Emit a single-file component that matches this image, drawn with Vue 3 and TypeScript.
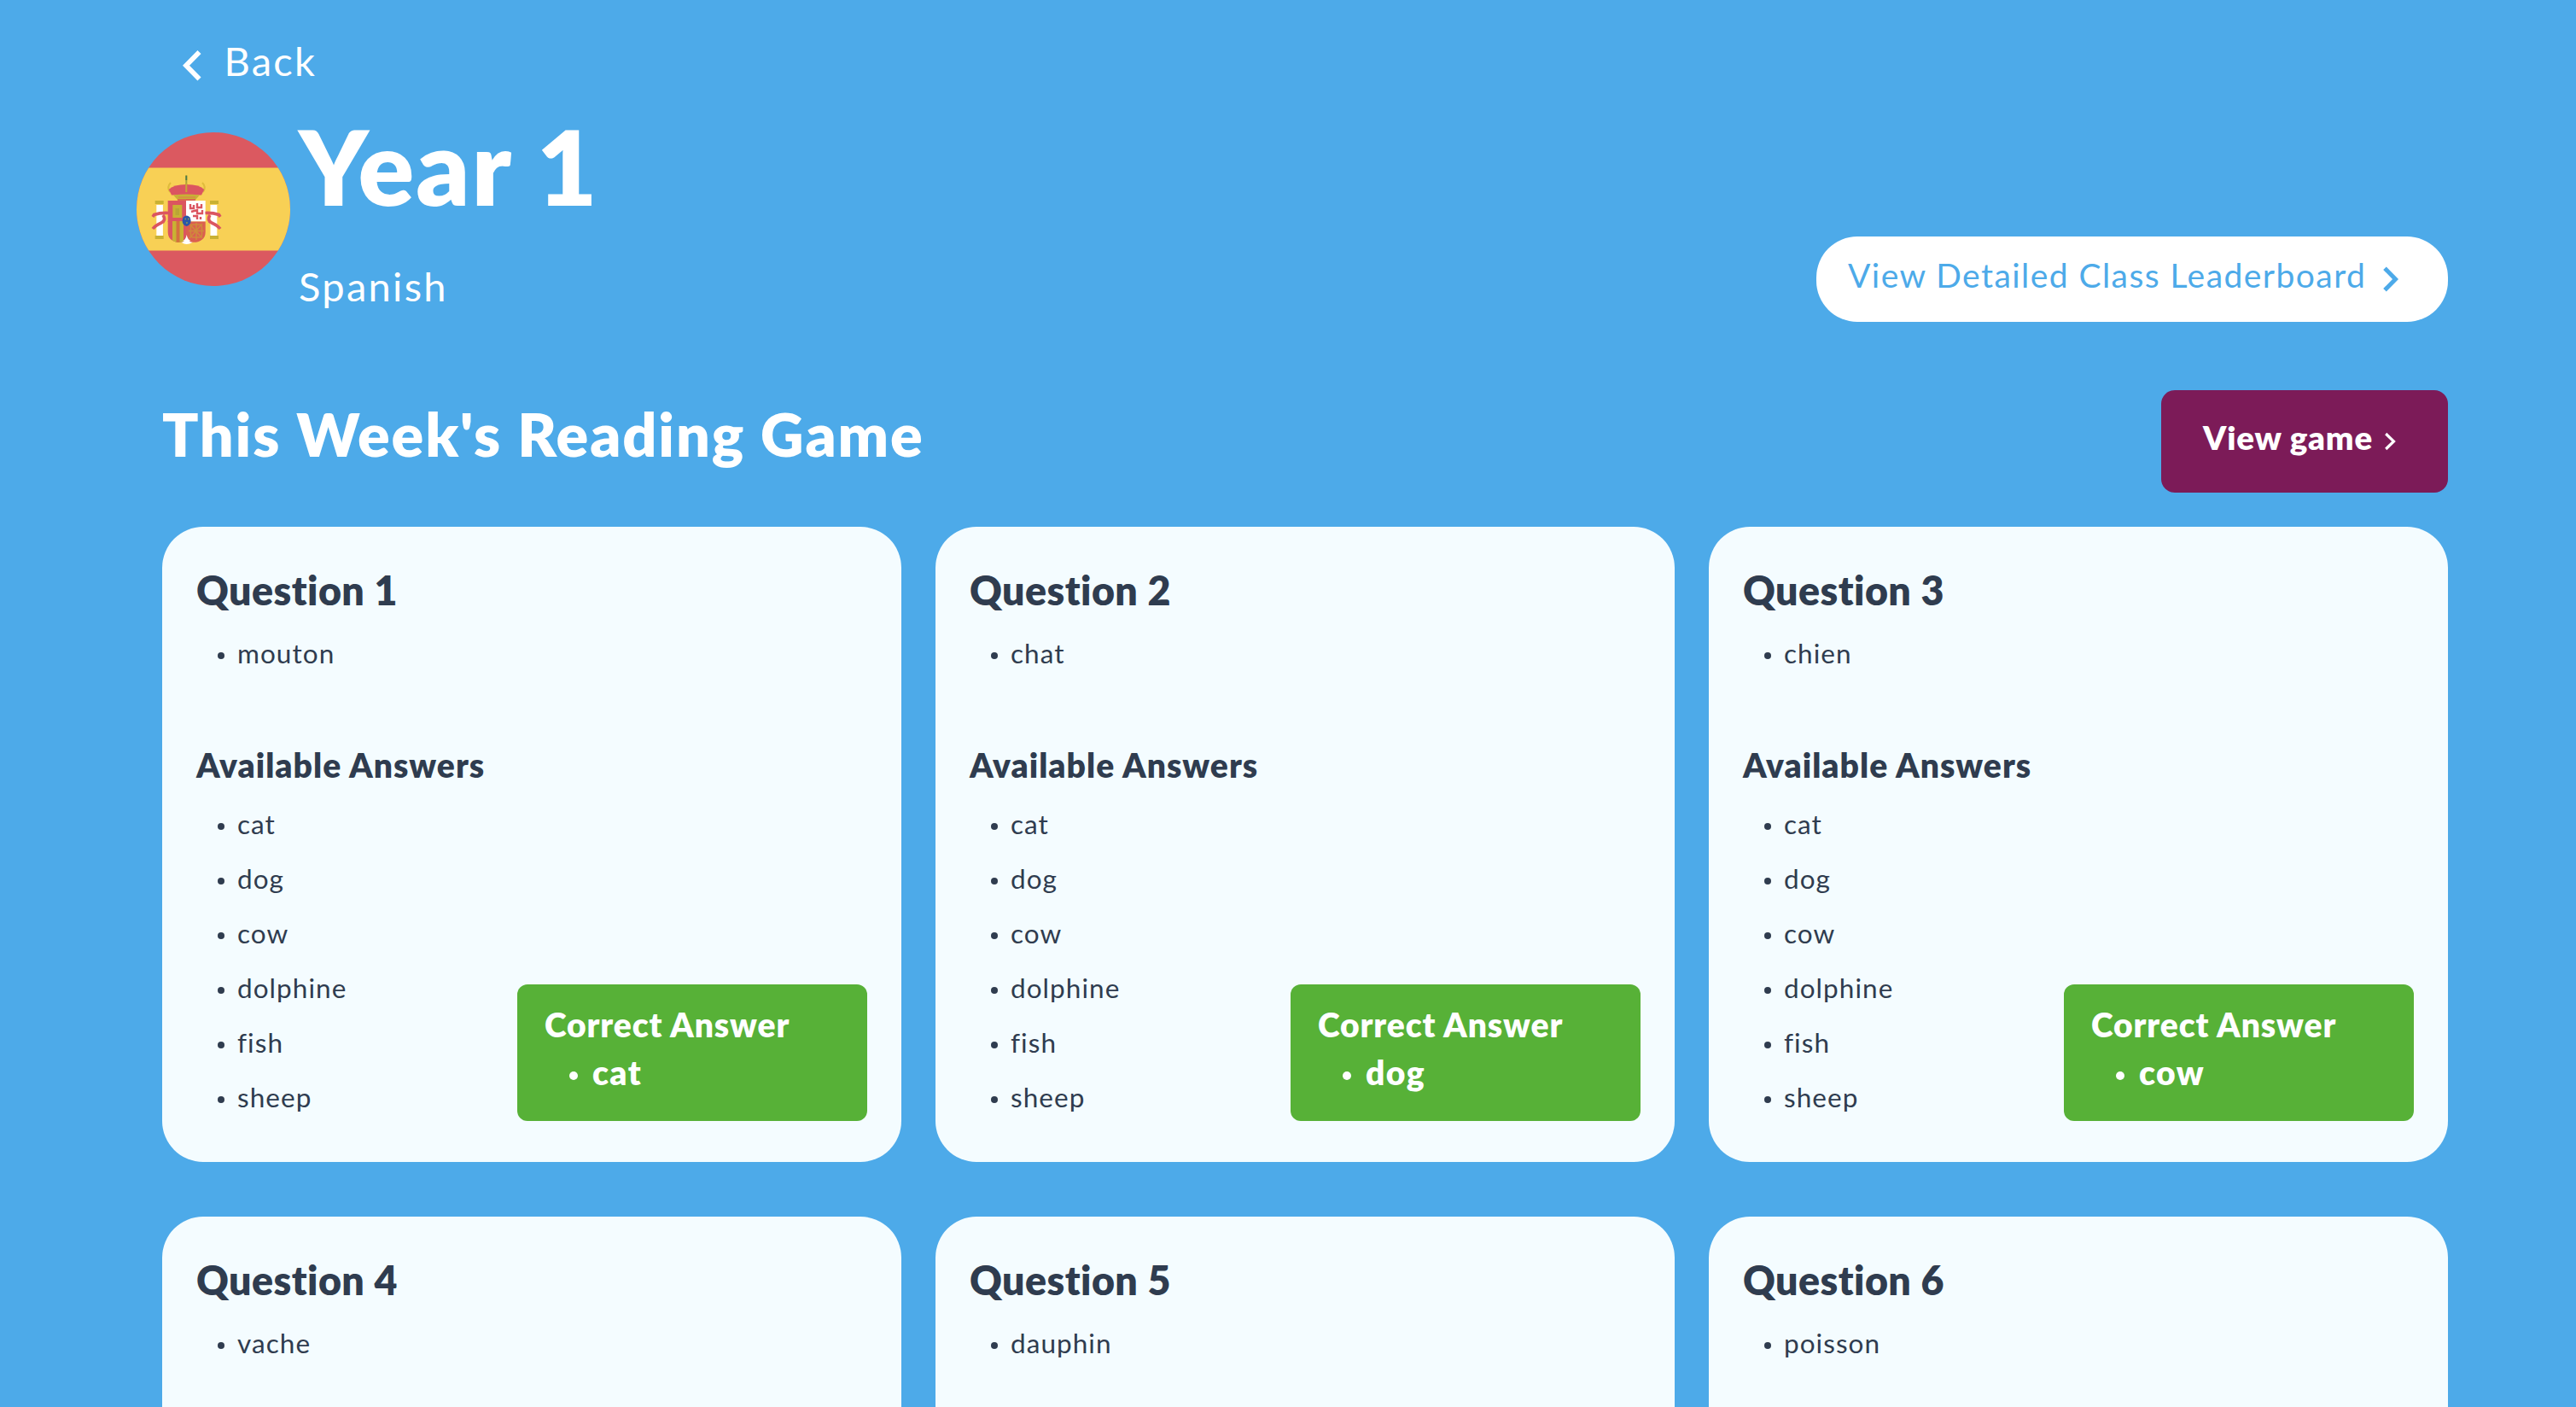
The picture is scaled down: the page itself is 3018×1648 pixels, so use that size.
<script setup lang="ts">
interface Question {
  id: number
  word: string
  answers: string[]
  correct?: string
}

const animals = ['cat', 'dog', 'cow', 'dolphine', 'fish', 'sheep']

const questions: Question[] = [
  { id: 1, word: 'mouton', answers: animals, correct: 'cat' },
  { id: 2, word: 'chat', answers: animals, correct: 'dog' },
  { id: 3, word: 'chien', answers: animals, correct: 'cow' },
  { id: 4, word: 'vache', answers: [] },
  { id: 5, word: 'dauphin', answers: [] },
  { id: 6, word: 'poisson', answers: [] },
]
</script>

<template>
  <main class="page">
    <a class="back">
      <svg class="back-icon" width="26" height="40" viewBox="0 0 26 40" fill="none" stroke="currentColor" stroke-width="5.7">
        <path d="M21.5 4 L6 19.8 L21.5 35.6" />
      </svg>
      <span>Back</span>
    </a>

    <header class="header">
      <svg class="flag" viewBox="0 0 180 180" width="180" height="180">
        <defs>
          <clipPath id="disc"><circle cx="90" cy="90" r="90" /></clipPath>
          <clipPath id="shield"><path d="M36.7 80 H80.7 V117 C80.7 131 61 131 58.7 125 C56 131 36.7 131 36.7 117 Z" /></clipPath>
        </defs>
        <g clip-path="url(#disc)">
          <rect width="180" height="180" fill="#db5960" />
          <rect y="41.5" width="180" height="97" fill="#f8d055" />
          <g class="arms">
            <path d="M40 59 Q35 64 39 70 M77 59 Q82 64 78 70" stroke="#dfbb3c" stroke-width="2" fill="none" />
            <path d="M58.3 50 V62" stroke="#a8a23a" stroke-width="2" />
            <path d="M58.3 51 V56" stroke="#4d7a4a" stroke-width="1.8" />
            <path d="M37.7 67 Q43 61 58.5 61 Q74 61 79.3 67 L76 73.5 H41 Z" fill="#db5560" />
            <path d="M58.3 60 V70" stroke="#c8a535" stroke-width="2" />
            <path d="M43 73.5 Q58 71.5 74 73.5 L69 79 H48 Z" fill="#c8b135" />
            <path d="M49 76 H69" stroke="#d98a46" stroke-width="1.3" />
            <rect x="48" y="78" width="21" height="3" fill="#dc6a4e" />
            <path d="M49 124 H69 Q66 131 58.7 131 Q52 131 49 124 Z" fill="#fff" />
            <g clip-path="url(#shield)">
              <rect x="36" y="80" width="22" height="25" fill="#db5560" />
              <rect x="42.3" y="85" width="11" height="15" fill="#c9b133" />
              <rect x="45.5" y="89" width="4.5" height="8" fill="#b9a536" />
              <rect x="58" y="80" width="23" height="24.5" fill="#fff" />
              <path d="M63 84 V89 H67 V85 M71 83 V88 H76 V84 M64 93 L71 91 V95 H77 V91 M66 98 H71 V102 M75 99 V102" stroke="#db5560" stroke-width="2.4" fill="none" />
              <rect x="36" y="104" width="22.5" height="25" fill="#db5560" />
              <rect x="42" y="104" width="13" height="25" fill="#c9b133" />
              <path d="M48.5 104 V129" stroke="#d4703f" stroke-width="4" />
              <rect x="58" y="104.5" width="23" height="25" fill="#db5f50" />
              <path d="M62 107 L77 124 M77 107 L62 124 M70 106 V126 M61 115.5 H79" stroke="#cf8a3c" stroke-width="1.6" />
              <rect x="63.5" y="108" width="13" height="15" rx="3" fill="none" stroke="#cf8a3c" stroke-width="1.6" />
            </g>
            <path d="M54 127 Q57.5 126 58.7 120 Q60 126 63.5 127 L59 129 Z" fill="#fff" />
            <ellipse cx="58.6" cy="103.7" rx="5" ry="6.2" fill="#2b56a8" />
            <path d="M56.5 101.5 h1.6 M60 101.5 h1.6 M58 106 h1.8" stroke="#8da053" stroke-width="1.6" />
            <rect x="23.3" y="85" width="7.6" height="36" fill="#fff" />
            <rect x="86.5" y="85" width="7.8" height="36" fill="#fff" />
            <path d="M21.7 82 h10 M21.7 123 h10 M86 82 h10 M86 123 h10" stroke="#c9b133" stroke-width="3.8" />
            <path d="M37 94.5 Q28 94 20.5 96.5 L19 99 M31 97 Q35 103 29 106 Q22 109 19 113" stroke="#db5560" stroke-width="3.6" fill="none" />
            <path d="M80.5 94.5 Q89 94 96.5 96.5 L98 99 M86 97 Q82 103 88 106 Q95 109 98 113" stroke="#db5560" stroke-width="3.6" fill="none" />
          </g>
        </g>
      </svg>
      <div class="titles">
        <h1>Year 1</h1>
        <p>Spanish</p>
      </div>
      <a class="pill">
        <span>View Detailed Class Leaderboard</span>
        <svg width="22" height="34" viewBox="0 0 22 34" fill="none" stroke="currentColor" stroke-width="5">
          <path d="M4 4.3 L16.5 17 L4 29.7" />
        </svg>
      </a>
    </header>

    <section>
      <div class="section-head">
        <h2>This Week's Reading Game</h2>
        <a class="game">
          <span>View game</span>
          <svg width="16" height="24" viewBox="0 0 16 24" fill="none" stroke="currentColor" stroke-width="3.2">
            <path d="M3.2 3 L12.5 12 L3.2 21" />
          </svg>
        </a>
      </div>

      <div class="grid">
        <article v-for="q in questions" :key="q.id" class="card">
          <h3>Question {{ q.id }}</h3>
          <ul class="list">
            <li>{{ q.word }}</li>
          </ul>
          <template v-if="q.answers.length">
            <h4>Available Answers</h4>
            <div class="answers">
              <ul class="list">
                <li v-for="a in q.answers" :key="a">{{ a }}</li>
              </ul>
              <div class="correct">
                <strong>Correct Answer</strong>
                <ul>
                  <li>{{ q.correct }}</li>
                </ul>
              </div>
            </div>
          </template>
        </article>
      </div>
    </section>
  </main>
</template>

<style>
body {
  margin: 0;
  background: #4daae9;
}
</style>

<style scoped>
.page {
  box-sizing: border-box;
  height: 1648px;
  overflow: hidden;
  padding: 39px 150px 0 190px;
  background: #4daae9;
  color: #fff;
  font-family: Lato, "Liberation Sans", sans-serif;
}

h1,
h2,
h3,
h4,
p,
ul {
  margin: 0;
  padding: 0;
}

ul {
  list-style: none;
}

.back {
  display: flex;
  height: 64px;
  padding-left: 22px;
  font-size: 47px;
  line-height: 64px;
  letter-spacing: 2.2px;
}

.back-icon {
  margin: 18px 24.5px 0 0;
}

.header {
  display: flex;
  align-items: flex-start;
  height: 333px;
  margin-top: 21px;
}

.flag {
  flex: none;
  margin: 31px 10px 0 -30px;
}

.arms {
  filter: blur(0.6px);
}

h1 {
  font-size: 122px;
  font-weight: 800;
  line-height: 140px;
  letter-spacing: 2px;
}

.titles p {
  margin-top: 38.5px;
  font-size: 47px;
  line-height: 64px;
  letter-spacing: 2.3px;
}

.pill {
  box-sizing: border-box;
  display: flex;
  width: 740px;
  height: 100px;
  margin: 153px 0 0 auto;
  padding: 0 56px 0 37px;
  border-radius: 48px;
  background: #fff;
  color: #4daae9;
  font-size: 39px;
  line-height: 90px;
  letter-spacing: 1.45px;
  white-space: nowrap;
}

.pill svg {
  align-self: center;
  margin-left: auto;
}

.section-head {
  display: flex;
  justify-content: space-between;
  height: 120px;
}

h2 {
  font-size: 70px;
  font-weight: 800;
  line-height: 102px;
  letter-spacing: 1.85px;
}

.game {
  box-sizing: border-box;
  display: flex;
  justify-content: space-between;
  width: 336px;
  height: 120px;
  padding: 0 60px 0 49px;
  border-radius: 16px;
  background: #7c1b58;
  font-size: 38.5px;
  font-weight: 800;
  line-height: 110px;
  letter-spacing: 0.8px;
}

.game svg {
  align-self: center;
}

.grid {
  display: grid;
  grid-template-columns: repeat(3, 866px);
  gap: 64px 40px;
  margin-top: 40px;
}

.card {
  box-sizing: border-box;
  height: 744px;
  padding: 40px 40px 44px;
  border-radius: 48px;
  background: #f4fcff;
  color: #2f3c4f;
}

h3 {
  font-size: 46.5px;
  font-weight: 800;
  line-height: 68px;
  letter-spacing: 0.45px;
  margin-bottom: 8px;
}

h4 {
  margin: 71px 0 9px;
  font-size: 39px;
  font-weight: 800;
  line-height: 56px;
  letter-spacing: 1.02px;
}

.list li {
  display: flex;
  align-items: center;
  padding-left: 25px;
  font-size: 31.5px;
  line-height: 64px;
  letter-spacing: 1.05px;
}

.list li::before {
  content: "";
  width: 8px;
  height: 8px;
  margin: 6px 15px 0 0;
  border-radius: 50%;
  background: currentColor;
}

.answers {
  display: flex;
  justify-content: space-between;
  align-items: flex-end;
}

.correct {
  box-sizing: border-box;
  width: 410px;
  height: 160px;
  margin-bottom: 4px;
  padding: 19px 32px 0;
  border-radius: 12px;
  background: #57b137;
  color: #fff;
  font-size: 39px;
  font-weight: 800;
  line-height: 56px;
  letter-spacing: 0.9px;
}

.correct strong {
  display: block;
  font-weight: inherit;
}

.correct li {
  display: flex;
  align-items: center;
  padding-left: 29px;
  letter-spacing: 1.4px;
}

.correct li::before {
  content: "";
  width: 10px;
  height: 10px;
  margin: 8px 17px 0 0;
  border-radius: 50%;
  background: currentColor;
}
</style>
